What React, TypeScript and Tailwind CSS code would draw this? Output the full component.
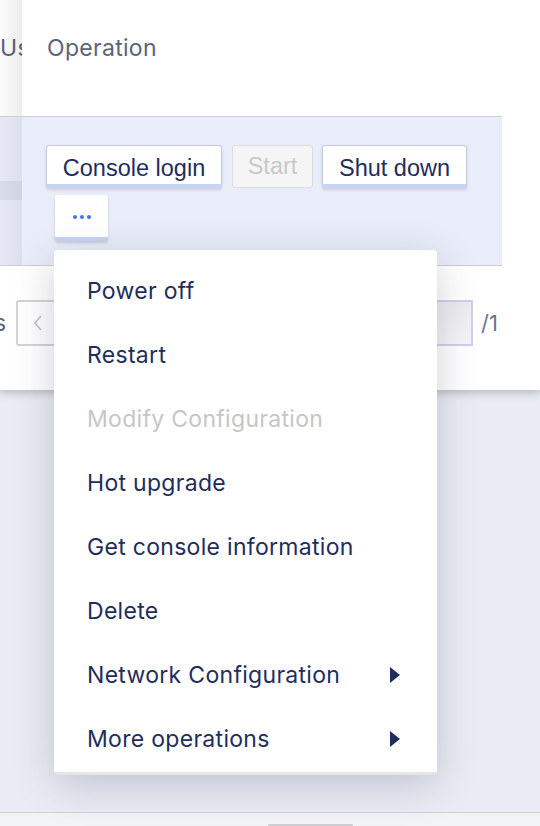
import React from "react";

const items: { label: string; disabled?: boolean; sub?: boolean }[] = [
  { label: "Power off" },
  { label: "Restart" },
  { label: "Modify Configuration", disabled: true },
  { label: "Hot upgrade" },
  { label: "Get console information" },
  { label: "Delete" },
  { label: "Network Configuration", sub: true },
  { label: "More operations", sub: true },
];

export default function App() {
  return (
    <div
      className="relative w-[540px] h-[826px] overflow-hidden bg-[#eaecf5]"
      style={{ fontFamily: "Inter, 'Liberation Sans', sans-serif" }}
    >
      {/* Card */}
      <div className="relative h-[390px] bg-white shadow-[0_3px_8px_rgba(0,0,0,0.22)] flex flex-col">
        {/* header row */}
        <div className="flex h-[117px] w-[502px] border-b border-[#c9cde0]">
          <div className="relative w-[22px] shrink-0 overflow-hidden flex items-center bg-white pb-[19px]">
            <span className="text-[23px] tracking-[0.3px] text-[#5b6478] whitespace-nowrap">Us</span>
            <div className="absolute inset-0 bg-gradient-to-r from-[rgba(0,0,0,0.01)] to-[rgba(0,0,0,0.07)]" />
          </div>
          <div className="flex-1 flex items-center pl-[25px] pb-[19px]">
            <span className="text-[23px] tracking-[0.3px] text-[#5b6478]">Operation</span>
          </div>
        </div>
        {/* body row */}
        <div className="flex h-[149px] w-[502px] bg-[#e9edf9] border-b border-[#c9cde0]">
          <div className="relative w-[22px] shrink-0 flex flex-col bg-[#e6e9f5]">
            <div className="h-[64px]" />
            <div className="h-[19px] bg-[#d8dbe9]" />
            <div className="flex-1" />
            <div className="absolute inset-0 bg-gradient-to-r from-[rgba(0,0,0,0)] to-[rgba(0,0,0,0.04)]" />
          </div>
          <div className="flex-1 pl-[24px] pt-[28px] flex flex-col gap-[7px]">
            <div className="flex" style={{ fontFamily: "'Liberation Sans', Arial, sans-serif" }}>
              <button className="h-[43px] w-[176px] bg-white border border-[#c5cadd] border-b-[4px] border-b-[#c6d3f3] rounded-[3px] shadow-[0_2px_3px_rgba(0,0,0,0.12)] text-[23.5px] text-[#1f2d5c] pt-[5px]">
                Console login
              </button>
              <button className="ml-[10px] h-[43px] w-[81px] bg-[#f5f5f5] border border-[#dcdcdc] rounded-[3px] text-[23.5px] text-[#c8c8c8] pt-[1px]">
                Start
              </button>
              <button className="ml-[9px] h-[43px] w-[145px] bg-white border border-[#c5cadd] border-b-[4px] border-b-[#c6d3f3] rounded-[3px] shadow-[0_2px_3px_rgba(0,0,0,0.12)] text-[23.5px] text-[#1f2d5c] pt-[5px]">
                Shut down
              </button>
            </div>
            <div className="pl-[9px]">
              <button className="h-[46px] w-[53px] bg-white border-b-[4px] border-b-[#c6d3f3] rounded-[3px] shadow-[0_2px_3px_rgba(0,0,0,0.14)] flex items-center justify-center gap-[3px] pt-[2px]">
                <span className="w-[4px] h-[4px] rounded-full bg-[#4d6ff5]" />
                <span className="w-[4px] h-[4px] rounded-full bg-[#4d6ff5]" />
                <span className="w-[4px] h-[4px] rounded-full bg-[#4d6ff5]" />
              </button>
            </div>
          </div>
        </div>
        {/* pagination */}
        <div className="relative flex-1 flex items-center w-[502px]">
          <span className="text-[23px] text-[#5b6478] ml-[-6px] pb-[10px]">s</span>
          <div className="ml-[10px] h-[46px] w-[50px] border-2 border-[#d4d4d4] rounded-[3px] flex items-center justify-start pl-[14px] mb-[10px]">
            <svg width="12" height="18" viewBox="0 0 12 18">
              <path d="M9 2 L3 9 L9 16" fill="none" stroke="#c4c4c4" strokeWidth="1.8" />
            </svg>
          </div>
          <div className="flex-1" />
          <div className="h-[46px] w-[48px] border-2 border-[#cdd1ea] bg-gradient-to-b from-[#ececee] to-[#f6f6f7] mb-[10px]" />
          <span className="ml-[8px] mr-[4px] text-[22px] text-[#6b7490] mb-[10px]">/1</span>
        </div>
      </div>

      {/* bottom bar */}
      <div className="absolute left-0 right-0 top-[812px] h-[14px] bg-[#f2f3f5] border-t border-[#cfd0d5]">
        <div className="absolute left-[268px] top-[11px] w-[85px] h-[2px] bg-[#cfcfd3] rounded" />
      </div>

      {/* dropdown */}
      <div className="absolute left-[54px] top-[250px] w-[383px] h-[525px] bg-white rounded-[4px] border-b-[3px] border-[#e6e6e9] shadow-[0_10px_40px_rgba(40,45,70,0.22)] pt-[9px]">
        {items.map((it) => (
          <div key={it.label} className="h-[64px] flex items-center pl-[33px] pr-[37px]">
            <span
              className={`flex-1 text-[23px] tracking-[0.3px] ${it.disabled ? "text-[#c6c6c6]" : "text-[#1f2d5c]"}`}
            >
              {it.label}
            </span>
            {it.sub && (
              <svg width="10" height="16" viewBox="0 0 10 16">
                <path d="M0 0 L10 8 L0 16 Z" fill="#1f2d5c" />
              </svg>
            )}
          </div>
        ))}
      </div>
    </div>
  );
}
